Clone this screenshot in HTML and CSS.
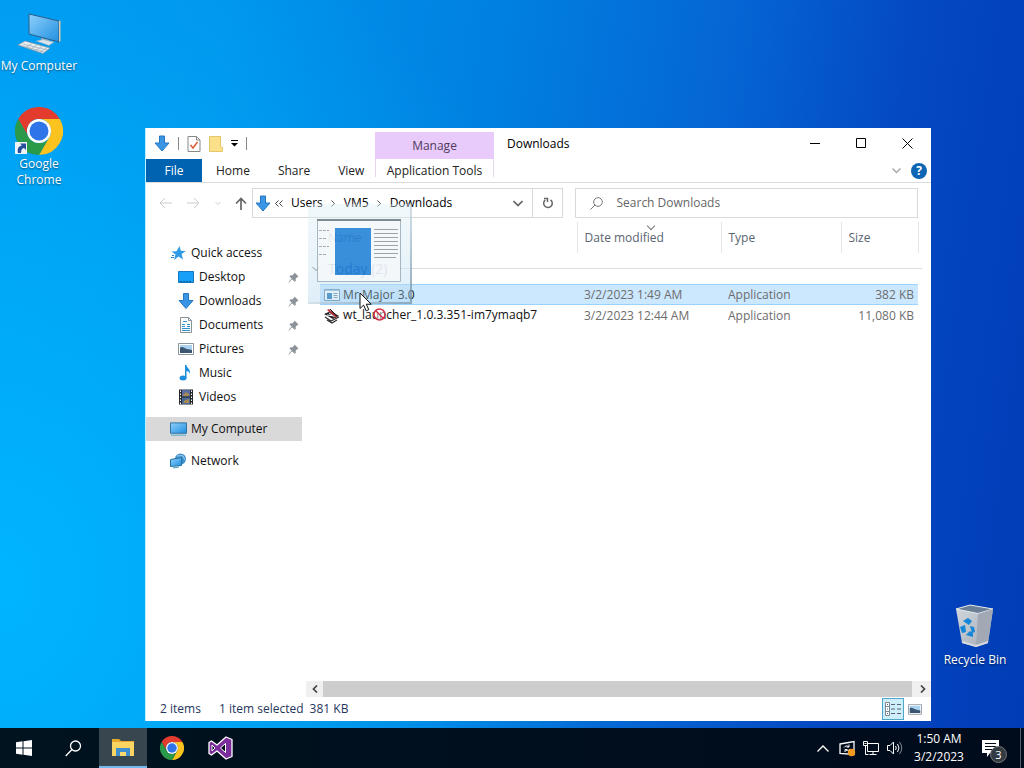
FILE: index.html
```html
<!DOCTYPE html>
<html lang="en">
<head>
    <meta charset="UTF-8">
    <meta name="viewport" content="width=device-width, initial-scale=1.0">
    <title>Downloads</title>
    <link rel="stylesheet" href="styles.css">
</head>
<body>
    <!-- Shared icons -->
    <svg class="defs" aria-hidden="true">
        <defs>
            <linearGradient id="screen" x1="0" y1="0" x2="1" y2="1">
                <stop offset="0" stop-color="#8fd0fb"/>
                <stop offset="1" stop-color="#1f8fe0"/>
            </linearGradient>
            <linearGradient id="bin" x1="0" y1="0" x2="1" y2="1">
                <stop offset="0" stop-color="#d3d8dd"/>
                <stop offset="1" stop-color="#a3abb6"/>
            </linearGradient>
        </defs>
        <symbol id="i-down" viewBox="0 0 16 16">
            <path d="M5.500 .5h5v7h4.500L8 15.500 1 7.500h4.500z" fill="#3a96e4" stroke="#2377c0"/>
        </symbol>
        <symbol id="i-chrome" viewBox="0 0 48 48">
            <path d="M24 12H44.800A24 24 0 0 0 3.200 12L13.600 30A12 12 0 0 1 24 12z" fill="#e33b2e"/>
            <path d="M44.800 12A24 24 0 0 1 24 48L34.400 30A12 12 0 0 0 24 12z" fill="#fcc31e"/>
            <path d="M24 48A24 24 0 0 1 3.200 12L13.600 30A12 12 0 0 0 34.400 30z" fill="#2a9a48"/>
            <circle cx="24" cy="24" r="12" fill="#fff"/>
            <circle cx="24" cy="24" r="9.500" fill="#2f74e8"/>
        </symbol>
        <symbol id="i-pin" viewBox="0 0 12 12">
            <path d="M7 .5l4.500 4.500-1.200.4-2 2 .2 2.300-1.300.8-2.600-2.600L1 11.500l-.5-.5L4 7.200 1.600 4.800l.8-1.200 2.300.1 2-2z" fill="#8b9299"/>
        </symbol>
        <symbol id="i-monitor" viewBox="0 0 18 16">
            <path d="M.5 1.500h17v11H.5z" fill="url(#screen)" stroke="#2a6f9f"/>
            <path d="M1 14.500h16" stroke="#4aa6c8"/>
        </symbol>
        <symbol id="i-picture" viewBox="0 0 16 12">
            <path d="M.5.500h15v11H.5z" fill="#fff" stroke="#8a959e"/>
            <path d="M2 2h12v8H2z" fill="#a9d3f1"/>
            <path d="M2 4.500c3-1.500 4 .5 7 1.500l5 1v3H2z" fill="#3c5570"/>
        </symbol>
    </svg>

    <main class="desktop">
        <a href="#" class="shortcut shortcut-computer">
            <svg width="48" height="48" viewBox="0 0 48 48">
                <path d="M14 4l30 7v21l-30-8z" fill="url(#screen)" stroke="#2c5f88"/>
                <path d="M44 11l1.500-.5V31L44 32z" fill="#d8c9b0"/>
                <path d="M26 28l8 2v3l-8-2z" fill="#9fb0bd"/>
                <path d="M21 31l7-1.500 11 2.500-5 3.500z" fill="#d9e4ec" stroke="#8fa5b5" stroke-width=".5"/>
                <path d="M3 35l7-4 25 7-7 5.500z" fill="#e9eef2" stroke="#8294a2" stroke-width=".7"/>
                <path d="M5.500 35.500l24 6.500M8 34l24 6M10 38l7-4.500M15 39.500l7-4.500M20 41l7-4.500M25 42l7-4.500" stroke="#9aa9b4" stroke-width=".7"/>
            </svg>
            <span>My Computer</span>
        </a>
        <a href="#" class="shortcut shortcut-chrome">
            <svg width="50" height="50" viewBox="0 0 50 50">
                <use href="#i-chrome" x="1" y="1" width="48" height="48"/>
                <path d="M1 36h12v12H1z" fill="#eef3f8"/>
                <path d="M4 47c-1-5 1-7 4-7.500L6 37.500h6v6.500l-2-2c-2 .5-3 2-3 5z" fill="#26509c"/>
            </svg>
            <span>Google<br>Chrome</span>
        </a>
        <a href="#" class="shortcut shortcut-bin">
            <svg width="48" height="48" viewBox="0 0 48 48">
                <path d="M5 7l14-4 23 4-5 34-12 4-14-4z" fill="url(#bin)"/>
                <path d="M5 7l14-4 23 4-15 4.500z" fill="#6b7f96" stroke="#e3e8ec"/>
                <path d="M27 12l15-5-5 34-12 4z" fill="#a2a9b4"/>
                <path d="M11 39l14 4 12-4v2l-12 4-14-4z" fill="#d9dcdf"/>
                <path d="M12 19l5-3 4 3-3 4zM9 25l5-2 1 7-4 1zM15 33l4-4 3 2v4zM19 24l4 1 1 5-3 1z" fill="#1586d8"/>
            </svg>
            <span>Recycle Bin</span>
        </a>

        <section class="window">
            <header class="ribbon">
                <div class="quick-tools">
                    <svg width="16" height="17"><use href="#i-down"/></svg>
                    <i class="divider"></i>
                    <button type="button" aria-label="Properties">
                        <svg width="14" height="16" viewBox="0 0 14 16">
                            <path d="M1 .5h8.500L13 4v11.500H1z" fill="#fff" stroke="#888"/>
                            <path d="M9.500.500V4H13" fill="none" stroke="#888"/>
                            <path d="M3.500 9l2.500 3 4.500-6" fill="none" stroke="#dc5b35" stroke-width="1.500"/>
                        </svg>
                    </button>
                    <button type="button" aria-label="New folder">
                        <svg width="14" height="16" viewBox="0 0 14 16">
                            <path d="M.5.500h11v10l2 1v4H.5z" fill="#fbe08a" stroke="#e6c666"/>
                        </svg>
                    </button>
                    <button type="button" aria-label="Customize">
                        <svg width="7" height="7" viewBox="0 0 7 7"><path d="M0 .5h7" stroke="#000"/><path d="M0 3h7L3.500 6.500z"/></svg>
                    </button>
                    <i class="divider"></i>
                </div>
                <div class="manage">Manage</div>
                <h1 class="title">Downloads</h1>
                <div class="controls">
                    <button type="button" aria-label="Minimize"><svg width="11" height="11"><path d="M0 5.500h10" stroke="#000"/></svg></button>
                    <button type="button" aria-label="Maximize"><svg width="11" height="11"><path d="M.5.500h9v9h-9z" fill="none" stroke="#000"/></svg></button>
                    <button type="button" aria-label="Close"><svg width="11" height="11"><path d="M.5.500l10 10M10.500.500l-10 10" stroke="#000"/></svg></button>
                </div>
                <nav class="tabs">
                    <a href="#" class="file-tab">File</a>
                    <a href="#">Home</a>
                    <a href="#">Share</a>
                    <a href="#">View</a>
                </nav>
                <a href="#" class="tools-tab">Application Tools</a>
                <div class="help">
                    <button type="button" aria-label="Expand the ribbon"><svg width="9" height="6"><path d="M.5.500l4 4 4-4" fill="none" stroke="#aaa" stroke-width="1.500"/></svg></button>
                    <button type="button" class="help-button" aria-label="Help">?</button>
                </div>
            </header>

            <div class="navbar">
                <div class="arrows">
                    <button type="button" aria-label="Back"><svg width="14" height="12"><path d="M6 1L1 6l5 5M1 6h12" fill="none" stroke="#ccc"/></svg></button>
                    <button type="button" aria-label="Forward"><svg width="14" height="12"><path d="M7 1l5 5-5 5M12 6H0" fill="none" stroke="#ccc"/></svg></button>
                    <button type="button" aria-label="Recent locations"><svg width="6" height="5"><path d="M.5 1L3 3.500 5.500 1" fill="none" stroke="#ccc"/></svg></button>
                    <button type="button" aria-label="Up"><svg width="12" height="13"><path d="M6 13V2M1 6.500l5-5 5 5" fill="none" stroke="#666" stroke-width="1.700"/></svg></button>
                </div>
                <div class="address">
                    <svg width="16" height="17"><use href="#i-down"/></svg>
                    <svg width="8" height="7"><path d="M3.500.500l-3 3 3 3M7.500.500l-3 3 3 3" fill="none" stroke="#444"/></svg>
                    <a href="#">Users</a>
                    <svg width="5" height="7"><path d="M.5.500l3 3-3 3" fill="none" stroke="#555"/></svg>
                    <a href="#">VM5</a>
                    <svg width="5" height="7"><path d="M.5.500l3 3-3 3" fill="none" stroke="#555"/></svg>
                    <a href="#">Downloads</a>
                    <button type="button" class="history" aria-label="Previous locations"><svg width="10" height="7"><path d="M.5 1L5 5.500 9.500 1" fill="none" stroke="#666" stroke-width="1.700"/></svg></button>
                    <button type="button" class="refresh" aria-label="Refresh"><svg width="12" height="12" viewBox="0 0 12 12"><path d="M8.500 2.800A4.300 4.300 0 1 1 3.200 3M2 1.500h3.500V5" fill="none" stroke="#666" stroke-width="1.500"/></svg></button>
                </div>
                <label class="search">
                    <svg width="13" height="13" viewBox="0 0 13 13"><circle cx="8" cy="5" r="4.300" fill="none" stroke="#777"/><path d="M5 8L.5 12.500" stroke="#777"/></svg>
                    <input type="search" placeholder="Search Downloads" aria-label="Search Downloads">
                </label>
            </div>

            <div class="content">
                <nav class="sidebar">
                    <a href="#">
                        <svg width="15" height="15" viewBox="0 0 15 15"><path d="M8.500 0l1.300 4.800 5 .3-4.200 3 1.400 5.400-4.500-3-4.500 3.500 1.500-5.500-4-3 5-.3z" fill="#2f9be6"/><path d="M0 11.500h3M1 9.500h2" stroke="#2f7fc4"/></svg>
                        <span>Quick access</span>
                    </a>
                    <a href="#" class="child">
                        <svg width="16" height="12"><path d="M.5.500h15v11H.5z" fill="#18a0f8" stroke="#1677bd"/><path d="M2 10.500h12" stroke="#0a5c9c" stroke-dasharray="2 1"/></svg>
                        <span>Desktop</span><svg class="pin" width="11" height="11"><use href="#i-pin"/></svg>
                    </a>
                    <a href="#" class="child">
                        <svg width="16" height="16"><use href="#i-down"/></svg>
                        <span>Downloads</span><svg class="pin" width="11" height="11"><use href="#i-pin"/></svg>
                    </a>
                    <a href="#" class="child">
                        <svg width="16" height="16" viewBox="0 0 16 16"><path d="M2.500.500h8l3 3v12h-11z" fill="#fff" stroke="#87929b"/><path d="M10.500.500v3h3" fill="none" stroke="#87929b"/><path d="M5 4.500h4M4 7.500h3M9 7.500h3M4 9.500h3M9 9.500h3M4 11.500h8M4 13.500h8" stroke="#2f8fc9"/></svg>
                        <span>Documents</span><svg class="pin" width="11" height="11"><use href="#i-pin"/></svg>
                    </a>
                    <a href="#" class="child">
                        <svg width="16" height="12"><use href="#i-picture"/></svg>
                        <span>Pictures</span><svg class="pin" width="11" height="11"><use href="#i-pin"/></svg>
                    </a>
                    <a href="#" class="child">
                        <svg width="16" height="16" viewBox="0 0 16 16"><ellipse cx="5" cy="13" rx="3.500" ry="2.500" fill="#1e8fdf"/><path d="M7 13V0h1.500c0 3 4.500 4 3.500 9-.5-2-2-3-3.500-3v7z" fill="#1e8fdf"/></svg>
                        <span>Music</span>
                    </a>
                    <a href="#" class="child">
                        <svg width="16" height="16" viewBox="0 0 16 16"><path d="M1 .5h14v15H1z" fill="#26272b"/><path d="M4 1h8v6.500H4z" fill="#596ea8"/><path d="M4 8.500h8V15H4z" fill="#46699a"/><path d="M5 6l3-3 3 2v2H5zM5 14l2-3 4-1v4z" fill="#a8894f"/><path d="M2.500 1.500v14M13.500 1.500v14" stroke="#fff" stroke-dasharray="1.500 1.500"/></svg>
                        <span>Videos</span>
                    </a>
                    <a href="#" class="root selected">
                        <svg width="17" height="16"><use href="#i-monitor"/></svg>
                        <span>My Computer</span>
                    </a>
                    <a href="#" class="root">
                        <svg width="17" height="16" viewBox="0 0 17 16"><circle cx="10.500" cy="6" r="5.500" fill="#3d8fd0"/><path d="M7 3c3 0 5-1 6 0s1 4 2.500 4" fill="none" stroke="#a4d4ef"/><path d="M.5 6.500l11-2v8l-11 1z" fill="url(#screen)" stroke="#27739f"/><path d="M3 15l6-1" stroke="#3c96c4"/></svg>
                        <span>Network</span>
                    </a>
                </nav>

                <div class="files">
                    <table>
                        <colgroup>
                            <col class="col-chevron"><col><col class="col-date"><col class="col-type"><col class="col-size"><col class="col-end">
                        </colgroup>
                        <thead>
                            <tr>
                                <td></td>
                                <th scope="col">Name</th>
                                <th scope="col" class="lined sorted">Date modified</th>
                                <th scope="col" class="lined">Type</th>
                                <th scope="col" class="lined">Size</th>
                                <td class="lined"></td>
                            </tr>
                        </thead>
                        <tbody>
                            <tr class="group">
                                <td><svg width="8" height="6"><path d="M.5 1L4 4.500 7.500 1" fill="none" stroke="#444"/></svg></td>
                                <th scope="rowgroup" colspan="5"><span>Today (2)</span></th>
                            </tr>
                            <tr class="active">
                                <td></td>
                                <td class="name">
                                    <svg width="16" height="12"><path d="M.5.500h15v11H.5z" fill="#fff" stroke="#6a8ea8"/><path d="M1 1.500h14" stroke="#9cc4de"/><path d="M3 4h5v6H3z" fill="#2678b8"/><path d="M9.500 4.500h4M9.500 6.500h4M9.500 8.500h4" stroke="#7090a8"/></svg>
                                    Mr Major 3.0
                                </td>
                                <td>3/2/2023 1:49 AM</td>
                                <td>Application</td>
                                <td class="size">382 KB</td>
                                <td></td>
                            </tr>
                            <tr>
                                <td></td>
                                <td class="name">
                                    <svg width="16" height="15" viewBox="0 0 16 15"><path d="M0 5l7-3 8 5-6 3z" fill="#222"/><path d="M1 8l6 4 8-4M3 11l5 3 5-3" fill="none" stroke="#333" stroke-width="1.300"/><path d="M3 6l8 1M5 4l6 4" stroke="#fff"/><path d="M3 1l9 8 1-1-8-8z" fill="#b92f38"/><path d="M6 0l6 6" stroke="#222"/></svg>
                                    wt_launcher_1.0.3.351-im7ymaqb7
                                </td>
                                <td>3/2/2023 12:44 AM</td>
                                <td>Application</td>
                                <td class="size">11,080 KB</td>
                                <td></td>
                            </tr>
                        </tbody>
                    </table>
                    <div class="scrollbar">
                        <button type="button" aria-label="Scroll left"><svg width="6" height="8"><path d="M5 .5L1.500 4 5 7.500" fill="none" stroke="#444" stroke-width="1.700"/></svg></button>
                        <div class="thumb"></div>
                        <button type="button" aria-label="Scroll right"><svg width="6" height="8"><path d="M1 .5L4.500 4 1 7.500" fill="none" stroke="#444" stroke-width="1.700"/></svg></button>
                    </div>
                </div>
            </div>

            <footer class="status">
                <span class="count">2 items</span>
                <span>1 item selected</span>
                <span class="total">381 KB</span>
                <button type="button" class="view current" aria-label="Details"><svg width="16" height="14" viewBox="0 0 16 14"><path d="M.5.500h4v13h-4zM.5 4.500h4M.5 9.500h4" fill="#fff" stroke="#7b8b95"/><path d="M2 2.500h1M2 7h1M2 11.500h1M6 2.500h4M12 2.500h4M6 7h4M12 7h4M6 11.500h4M12 11.500h4" stroke="#54636c"/></svg></button>
                <button type="button" class="view" aria-label="Large icons"><svg width="14" height="11"><use href="#i-picture"/></svg></button>
            </footer>
        </section>

        <!-- File being dragged, with the pointer over it -->
        <div class="ghost">
            <svg width="84" height="63" viewBox="0 0 84 63">
                <path d="M.5.500h83v62H.5z" fill="#f6f9fb" stroke="#98a9b5"/>
                <path d="M0 1h84" stroke="#667480" stroke-width="2"/>
                <path d="M18 9h36v47H18z" fill="#1379d4"/>
                <path d="M57 10.500h24M57 14.500h24M57 18.500h24M57 22.500h24M57 26.500h24M57 30.500h24M57 34.500h24M57 38.500h22" stroke="#8c9298"/>
                <path d="M2 11.500h10M2 19.500h8M2 27.500h10M2 35.500h8" stroke="#929da6" stroke-dasharray="3 1"/>
            </svg>
        </div>
        <svg class="pointer" width="32" height="30" viewBox="0 0 32 30">
            <path d="M1 1v15.500l3.600-3.400 2.600 5.800 2.600-1.200-2.500-5.500h4.900z" fill="#fff" stroke="#111"/>
            <circle cx="20.500" cy="22.500" r="5.500" fill="#fff" fill-opacity=".5" stroke="#d03044" stroke-width="1.500"/>
            <path d="M16.500 18.500l8 8" stroke="#d03044" stroke-width="1.500"/>
        </svg>
    </main>

    <footer class="taskbar">
        <button type="button" class="app" aria-label="Start"><svg width="16" height="16" viewBox="0 0 16 16"><path d="M0 2.200L6.500 1.300V7.500H0zM7.500 1.200L16 0v7.500H7.500zM0 8.500h6.500v6.200L0 13.800zM7.500 8.500H16V16l-8.500-1.200z" fill="#fff"/></svg></button>
        <button type="button" class="app" aria-label="Search"><svg width="17" height="17" viewBox="0 0 17 17"><circle cx="10.500" cy="6" r="5" fill="none" stroke="#fff" stroke-width="1.300"/><path d="M7 9.500L.7 16" stroke="#fff" stroke-width="1.300"/></svg></button>
        <button type="button" class="app open" aria-label="File Explorer">
            <svg width="22" height="19" viewBox="0 0 22 19"><path d="M0 1h7l2 2h13v15H0z" fill="#e9a92d"/><path d="M0 4h22v14H0z" fill="#fcd462"/><path d="M4 18V10h14v8h-4v-4H8v4z" fill="#3f8fcf"/><path d="M8 14h6v4H8z" fill="#fbd970"/></svg>
        </button>
        <button type="button" class="app" aria-label="Google Chrome"><svg width="24" height="24"><use href="#i-chrome"/></svg></button>
        <button type="button" class="app" aria-label="Visual Studio">
            <svg width="26" height="24" viewBox="0 0 26 24"><path d="M18 1l6 2.500v17L18 23l-9-8-5.500 4L1 17.500v-11L3.500 5 9 9z" fill="#7b2d9b" stroke="#fff" stroke-width="1.300" stroke-linejoin="round"/><path d="M4 9v6l3-3zM12.500 12l5-4.500v9z" fill="#001018" stroke="#fff"/></svg>
        </button>
        <div class="tray">
            <button type="button" aria-label="Show hidden icons"><svg width="12" height="7"><path d="M.5 6.500L6 1l5.500 5.500" fill="none" stroke="#fff" stroke-width="1.300"/></svg></button>
            <button type="button" aria-label="Updates"><svg width="17" height="17" viewBox="0 0 17 17"><path d="M1 4l14-2.500v13L1 13.500z" fill="none" stroke="#fff" stroke-width="1.300"/><path d="M5 7.500c1-2 4-2 5-.5V4.500M10 7H7.500M11 9c-1 2-4 2-5 .5V12M6 9.500h2.500" fill="none" stroke="#fff"/><circle cx="12.500" cy="12.500" r="3.700" fill="#f39a1f"/></svg></button>
            <button type="button" aria-label="Network"><svg width="16" height="15" viewBox="0 0 16 15"><path d="M4.500 2.500h11v8h-11zM10 10.500v3M6.500 13.500h7M.5.500h4v4h-4zM2.500 4.500v9h3" fill="none" stroke="#fff"/><path d="M1 1h3v3H1z" fill="#000b18"/><path d="M1.500 2.500h2" stroke="#fff"/></svg></button>
            <button type="button" aria-label="Volume"><svg width="16" height="14" viewBox="0 0 16 14"><path d="M.5 4.500h2.500l3.500-3.500v12L3 9.500H.5z" fill="none" stroke="#fff"/><path d="M8.500 5q1.500 2 0 4M10.500 3q3 4 0 8" fill="none" stroke="#fff"/><path d="M12.500 1q4.500 6 0 12" fill="none" stroke="#7f8790"/></svg></button>
        </div>
        <time class="clock">1:50 AM<br>3/2/2023</time>
        <button type="button" class="notices" aria-label="Notifications">
            <svg width="17" height="17" viewBox="0 0 17 17"><path d="M0 0h17v13h-9l-3 4v-4H0z" fill="#fff"/><path d="M3 3.500h11M3 6.500h11M3 9.500h7" stroke="#000b18"/></svg>
            <span class="badge">3</span>
        </button>
        <button type="button" class="show-desktop" aria-label="Show desktop"></button>
    </footer>
</body>
</html>
```

FILE: styles.css
```css
* {
    box-sizing: border-box;
}

body {
    margin: 0;
    height: 100vh;
    display: flex;
    flex-direction: column;
    overflow: hidden;
    font-family: "Open Sans", "Noto Sans", sans-serif;
    font-size: 12px;
    line-height: 16px;
    color: #222;
}

a {
    color: inherit;
    text-decoration: none;
}

button {
    display: flex;
    align-items: center;
    justify-content: center;
    padding: 0;
    border: 0;
    background: none;
    font: inherit;
    color: inherit;
}

svg {
    display: block;
    flex: none;
}

.defs {
    position: absolute;
    width: 0;
    height: 0;
}

/* Desktop */
.desktop {
    position: relative;
    flex: 1;
    background:
        radial-gradient(ellipse 60% 100% at 0% 80%, rgba(0, 184, 255, 0.9) 0%, rgba(0, 180, 255, 0) 100%),
        linear-gradient(98deg, #0098f0 0%, #0094ec 20%, #0080e0 45%, #0566d4 65%, #0448c2 82%, #003cb6 100%);
}

.shortcut {
    position: absolute;
    width: 78px;
    display: flex;
    flex-direction: column;
    align-items: center;
    color: #fff;
    text-align: center;
    line-height: 15px;
    text-shadow: 0 1px 2px rgba(0, 0, 0, 0.5);
}

.shortcut-computer {
    left: 0;
    top: 10px;
}

.shortcut-chrome {
    left: 0;
    top: 106px;
    line-height: 16px;
}

.shortcut-bin {
    right: 10px;
    bottom: 61px;
    gap: 2px;
}

/* Explorer window */
.window {
    position: absolute;
    left: 145px;
    right: 93px;
    top: 128px;
    bottom: 7px;
    display: flex;
    flex-direction: column;
    background: #fff;
    border-left: 1px solid #bdf0ff;
}

.ribbon {
    display: grid;
    grid-template-columns: 229px 119px 1fr auto;
    grid-template-rows: 31px 23px;
    border-bottom: 1px solid #dadbdc;
}

.quick-tools {
    display: flex;
    align-items: center;
    gap: 8px;
    padding-left: 8px;
}

.divider {
    width: 1px;
    height: 13px;
    background: #888;
}

.manage {
    margin-top: 4px;
    background: #e8cbfb;
    color: #4f3a5c;
    text-align: center;
    line-height: 28px;
}

.title {
    margin: 0;
    padding-left: 13px;
    font-size: 12px;
    font-weight: 400;
    line-height: 31px;
    color: #000;
}

.controls {
    display: flex;
    padding-right: 1px;
}

.controls button {
    width: 46px;
}

.tabs {
    display: flex;
    line-height: 24px;
}

.tabs a {
    padding: 0 14px;
}

.tabs .file-tab {
    flex: none;
    width: 56px;
    padding: 0;
    background: #0063b1;
    color: #fff;
    text-align: center;
}

.tools-tab {
    height: 18px;
    border: solid #e3d5ea;
    border-width: 0 1px;
    text-align: center;
    line-height: 24px;
}

.help {
    grid-column: 3 / 5;
    display: flex;
    align-items: center;
    justify-content: flex-end;
    gap: 10px;
    padding-right: 4px;
}

.help-button {
    width: 16px;
    height: 16px;
    border-radius: 50%;
    background: #0c66b4;
    color: #fff;
    font-weight: 700;
}

/* Navigation row */
.navbar {
    display: flex;
    padding: 5px 13px 4px;
}

.arrows {
    display: flex;
    align-items: center;
    gap: 14px;
    width: 93px;
}

.address,
.search {
    display: flex;
    align-items: center;
    height: 30px;
    border: 1px solid #d9d9d9;
}

.address {
    flex: 307 1 0;
    gap: 8px;
    padding-left: 2px;
    color: #000;
}

.address > svg:first-child {
    margin-right: -4px;
}

.history {
    width: 28px;
    margin-left: auto;
    margin-right: -8px;
}

.refresh {
    width: 30px;
    height: 28px;
    border-left: 1px solid #d9d9d9;
}

.search {
    flex: 326 1 0;
    gap: 13px;
    margin-left: 12px;
    padding-left: 14px;
}

.search input {
    flex: 1;
    min-width: 0;
    padding: 0;
    border: 0;
    outline: 0;
    background: none;
    font: inherit;
}

.search input::placeholder {
    color: #666;
    opacity: 1;
}

/* Window body */
.content {
    flex: 1;
    display: flex;
    min-height: 0;
}

.sidebar {
    width: 156px;
    padding-top: 19px;
    color: #111;
}

.sidebar a {
    display: flex;
    align-items: center;
    gap: 5px;
    height: 24px;
    padding-left: 25px;
}

.sidebar .child {
    padding-left: 32px;
}

.sidebar .root {
    gap: 4px;
    margin-top: 8px;
    padding-left: 24px;
}

.sidebar .selected {
    background: #d9d9d9;
}

.sidebar .pin {
    margin-left: auto;
    margin-right: 3px;
}

.files {
    flex: 1;
    display: flex;
    flex-direction: column;
    justify-content: space-between;
    min-width: 0;
    padding-left: 4px;
}

table {
    margin: 0 9px 0 6px;
    border-collapse: collapse;
    table-layout: fixed;
    color: #6d6d6d;
}

.col-chevron {
    width: 8px;
}

.col-date {
    width: 144px;
}

.col-type {
    width: 120px;
}

.col-size {
    width: 77px;
}

.col-end {
    width: 4px;
}

th,
td {
    height: 21px;
    padding: 0;
    font-weight: 400;
    text-align: left;
    white-space: nowrap;
}

td:nth-child(n+3),
th:nth-child(n+3) {
    padding-left: 7px;
}

tbody td:last-child,
thead td:last-child {
    padding: 0;
}

thead th,
thead td {
    position: relative;
    height: 31px;
    color: #5a6470;
}

thead th:nth-child(2) {
    padding-left: 8px;
}

.lined {
    border-left: 1px solid #e5e5e5;
}

/* Sort arrow above the column name */
.sorted::before {
    content: "";
    position: absolute;
    left: 70px;
    top: 1px;
    width: 5px;
    height: 5px;
    border: solid #777;
    border-width: 0 1px 1px 0;
    transform: rotate(45deg);
}

.group td,
.group th {
    height: 31px;
}

.group th {
    padding-left: 8px;
    font-size: 14px;
    color: #1e3287;
}

.group span {
    display: flex;
    align-items: center;
    gap: 8px;
}

.group span::after {
    content: "";
    flex: 1;
    height: 1px;
    background: #dedede;
}

.active td:not(:first-child):not(:last-child) {
    background: #cce8ff;
    box-shadow: inset 0 1px #99d1ff, inset 0 -1px #99d1ff;
}

.name {
    color: #111;
}

.name svg {
    display: inline-block;
    vertical-align: middle;
    margin-left: 4px;
}

td.size {
    padding-right: 4px;
    text-align: right;
}

.scrollbar {
    display: flex;
    height: 16px;
    background: #f0f0f0;
}

.scrollbar button {
    width: 17px;
}

.thumb {
    flex: 1;
    margin-right: 2px;
    background: #cdcdcd;
}

.status {
    display: flex;
    align-items: center;
    height: 24px;
    padding: 0 5px 0 14px;
    color: #26365c;
}

.count {
    width: 59px;
}

.total {
    margin: 0 auto 0 6px;
}

.view {
    width: 22px;
    height: 22px;
}

.current {
    border: 1px solid #4ba8c8;
    background: #cdeefa;
}

/* Drag image and pointer */
.ghost {
    position: absolute;
    left: 308px;
    top: 204px;
    padding: 15px 9px 20px;
    border: solid rgba(110, 140, 160, 0.55);
    border-width: 0 2px 2px 0;
    border-image: linear-gradient(to bottom right, rgba(110, 140, 160, 0) 30%, rgba(110, 140, 160, 0.7)) 2;
    background: linear-gradient(to bottom, rgba(220, 238, 246, 0.4), rgba(210, 232, 244, 0.5) 60%, rgba(160, 205, 235, 0.35));
}

.ghost svg {
    opacity: 0.82;
}

.pointer {
    position: absolute;
    left: 359px;
    top: 292px;
}

/* Taskbar */
.taskbar {
    display: flex;
    align-items: stretch;
    gap: 1px;
    height: 40px;
    background: linear-gradient(to right, #00131f, #000b1c);
    color: #fff;
}

.app {
    width: 48px;
}

.open {
    margin-left: 1px;
    background: #37464f;
    border-bottom: 2px solid #76b9ed;
}

.tray {
    display: flex;
    margin-left: auto;
}

.tray button {
    width: 24px;
}

.clock {
    width: 62px;
    padding-top: 2px;
    text-align: center;
    line-height: 18px;
}

.notices {
    position: relative;
    width: 48px;
    padding-right: 10px;
}

.badge {
    position: absolute;
    left: 19px;
    bottom: 5px;
    width: 17px;
    height: 17px;
    border: 1px solid #777;
    border-radius: 50%;
    background: #333b42;
    font-size: 11px;
    line-height: 15px;
}

.show-desktop {
    width: 4px;
    border-left: 1px solid #555e68;
}
```
